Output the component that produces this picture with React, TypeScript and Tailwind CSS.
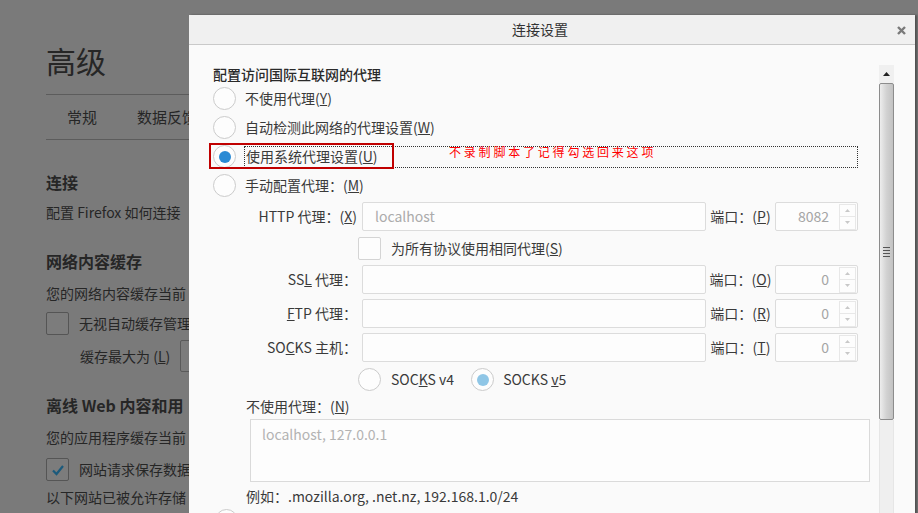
import React from 'react'

const font = "font-['Noto_Sans_CJK_SC','Noto_Sans',sans-serif]"

/** 暗くなった背景ページ（詳細設定） */
function BackgroundPage() {
    return (
        <div className="w-[189px] overflow-hidden pl-[46px] text-[#262626]">
            <div className="h-[40px]" />
            <div className="h-[40px] text-[30px] leading-[40px]">高级</div>
            <div className="mt-[14px] h-px w-[160px] bg-[#5c5c5c]" />
            <div className="flex h-[44px] items-center gap-[40px] pl-[21px] text-[15px] whitespace-nowrap">
                <span>常规</span>
                <span>数据反馈</span>
            </div>
            <div className="h-px w-[160px] bg-[#5c5c5c]" />
            <div className="mt-[30px] h-[24px] text-[16px] leading-[24px] font-bold">连接</div>
            <div className="mt-[6px] h-[24px] text-[14px] leading-[24px] whitespace-nowrap">配置 Firefox 如何连接</div>
            <div className="mt-[25px] h-[24px] text-[16px] leading-[24px] font-bold">网络内容缓存</div>
            <div className="mt-[8px] h-[24px] text-[14px] leading-[24px] whitespace-nowrap">您的网络内容缓存当前</div>
            <div className="mt-[7px] flex h-[23px] items-center gap-[10px] whitespace-nowrap">
                <div className="h-[23px] w-[23px] shrink-0 rounded-[2px] border border-[#555] bg-[#7c7c7c]" />
                <span className="text-[14px]">无视自动缓存管理</span>
            </div>
            <div className="mt-[5px] flex h-[32px] items-center pl-[34px] whitespace-nowrap">
                <span className="w-[100px] shrink-0 text-[14px]">缓存最大为 (<u>L</u>)</span>
                <div className="h-[32px] w-[60px] shrink-0 rounded-[2px] border border-[#5a5a5a] bg-[#7c7c7c]" />
            </div>
            <div className="mt-[21px] h-[24px] text-[16px] leading-[24px] font-bold whitespace-nowrap">离线 Web 内容和用</div>
            <div className="mt-[8px] h-[24px] text-[14px] leading-[24px] whitespace-nowrap">您的应用程序缓存当前</div>
            <div className="mt-[9px] flex h-[23px] items-center gap-[10px] whitespace-nowrap">
                <div className="flex h-[23px] w-[23px] shrink-0 items-center justify-center rounded-[2px] border border-[#555] bg-[#7c7c7c]">
                    <svg width="14" height="12" viewBox="0 0 14 12">
                        <path d="M2 6.5 L5.5 10 L12 2" fill="none" stroke="#1b5a7c" strokeWidth="2.2" />
                    </svg>
                </div>
                <span className="text-[14px]">网站请求保存数据</span>
            </div>
            <div className="mt-[4px] h-[24px] text-[14px] leading-[24px] whitespace-nowrap">以下网站已被允许存储</div>
        </div>
    )
}

function Radio({ checked = false, light = false }: { checked?: boolean, light?: boolean }) {
    return (
        <div className="flex h-[23px] w-[23px] shrink-0 items-center justify-center rounded-full border border-[#cbcbcb] bg-[#fdfdfd]">
            {checked && <div className={`h-[12px] w-[12px] rounded-full ${light ? 'bg-[#8fc6e6]' : 'bg-[#2a8ad4]'}`} />}
        </div>
    )
}

type ProxyRowProps = {
    label: React.ReactNode,
    portLabel: React.ReactNode,
    value?: string,
    port: string
}

/** プロキシ行（ホスト入力＋ポート入力） */
function ProxyRow({ label, portLabel, value, port }: ProxyRowProps) {
    return (
        <div className="flex h-[29px] items-center pl-[33px] whitespace-nowrap">
            <div className="w-[111px] text-right text-[14px] text-[#3a3a3a]">{label}</div>
            <div className="ml-[5px] flex h-[29px] w-[344px] items-center rounded-[2px] border border-[#dcdcdc] bg-[#fdfdfd] pl-[12px] text-[14px] text-[#ababab]">
                {value}
            </div>
            <div className="flex w-[69px] justify-center text-[14px] text-[#3a3a3a]">{portLabel}</div>
            <div className="flex h-[29px] w-[83px] items-center rounded-[2px] border border-[#dcdcdc] bg-[#fdfdfd]">
                <span className="flex-1 pr-[10px] text-right text-[14px] text-[#a5a5a5]">{port}</span>
                <div className="mr-[1px] flex h-[26px] w-[17px] flex-col">
                    <div className="flex flex-1 items-center justify-center border border-[#e8e8e8]">
                        <svg width="5" height="3" viewBox="0 0 5 3"><path d="M0 3 L2.5 0 L5 3Z" fill="#c8c8c8" /></svg>
                    </div>
                    <div className="flex flex-1 items-center justify-center border border-t-0 border-[#e8e8e8]">
                        <svg width="5" height="3" viewBox="0 0 5 3"><path d="M0 0 L2.5 3 L5 0Z" fill="#c8c8c8" /></svg>
                    </div>
                </div>
            </div>
        </div>
    )
}

function Scrollbar() {
    return (
        <div className="mt-[20px] flex w-[15px] shrink-0 flex-col">
            <div className="flex h-[18px] items-center justify-center bg-[#f0f0f0]">
                <svg width="7" height="4" viewBox="0 0 7 4"><path d="M0 4 L3.5 0 L7 4Z" fill="#222" /></svg>
            </div>
            <div className="flex h-[337px] items-center justify-center rounded-[2px] border border-[#8c8c8c] bg-gradient-to-r from-[#ededed] via-[#d2d2d2] to-[#c2c2c2]">
                <div className="flex w-[7px] flex-col gap-[2px]">
                    <div className="h-px bg-[#555]" />
                    <div className="h-px bg-[#555]" />
                    <div className="h-px bg-[#555]" />
                    <div className="h-px bg-[#555]" />
                </div>
            </div>
            <div className="flex-1 border-x border-[#e6e6e6] bg-[#efefef]" />
        </div>
    )
}

/** 接続設定ダイアログ */
function ConnectionDialog() {
    const radios = [
        { label: <>不使用代理(<u>Y</u>)</> },
        { label: <>自动检测此网络的代理设置(<u>W</u>)</> },
    ]
    return (
        <div className="absolute left-[189px] top-[15px] flex h-[500px] w-[726px] flex-col overflow-hidden bg-[#fafafa] shadow-[2px_0_2px_rgba(0,0,0,0.35)]">
            <div className="relative flex h-[30px] shrink-0 items-center justify-center border-b border-[#c9c9c9] bg-[#f0f0f0] pr-[24px] text-[14px] text-[#333]">
                连接设置
                <svg className="absolute right-[9px] top-[11px]" width="9" height="9" viewBox="0 0 9 9">
                    <path d="M1 1 L8 8 M8 1 L1 8" stroke="#7a7a7a" strokeWidth="2.4" />
                </svg>
            </div>
            <div className="flex flex-1">
                <div className="w-[690px] shrink-0 pl-[24px] text-[14px] text-[#3a3a3a]">
                    <div className="mt-[19px] h-[20px] leading-[20px] font-medium text-[#2a2a2a]">配置访问国际互联网的代理</div>
                    {radios.map((r, i) => (
                        <div key={i} className="flex h-[29px] items-center gap-[9px] whitespace-nowrap">
                            <Radio />
                            <span>{r.label}</span>
                        </div>
                    ))}
                    <div className="relative flex h-[29px] items-center whitespace-nowrap">
                        <Radio checked />
                        <div className="ml-[8px] flex h-[22px] w-[614px] items-center border border-dotted border-[#333] pl-[1px]">
                            使用系统代理设置(<u>U</u>)
                        </div>
                        <div className="absolute left-[-4px] top-[1px] h-[26px] w-[185px] border-2 border-[#c00000]" />
                        <div className="absolute left-[236px] top-[2px] text-[12px] leading-[16px] tracking-[2.8px] text-[#ff0000]">
                            不录制脚本了记得勾选回来这项
                        </div>
                    </div>
                    <div className="flex h-[29px] items-center gap-[9px] whitespace-nowrap">
                        <Radio />
                        <span>手动配置代理：(<u>M</u>)</span>
                    </div>
                    <div className="mt-[2px]">
                        <ProxyRow label={<>HTTP 代理：(<u>X</u>)</>} value="localhost" portLabel={<>端口：(<u>P</u>)</>} port="8082" />
                    </div>
                    <div className="mt-[6px] flex h-[23px] items-center gap-[10px] pl-[145px] whitespace-nowrap">
                        <div className="h-[23px] w-[23px] rounded-[2px] border border-[#d4d4d4] bg-[#fdfdfd]" />
                        <span>为所有协议使用相同代理(<u>S</u>)</span>
                    </div>
                    <div className="mt-[5px]">
                        <ProxyRow label={<>SS<u>L</u> 代理：</>} portLabel={<>端口：(<u>O</u>)</>} port="0" />
                    </div>
                    <div className="mt-[5px]">
                        <ProxyRow label={<><u>F</u>TP 代理：</>} portLabel={<>端口：(<u>R</u>)</>} port="0" />
                    </div>
                    <div className="mt-[5px]">
                        <ProxyRow label={<>SO<u>C</u>KS 主机：</>} portLabel={<>端口：(<u>T</u>)</>} port="0" />
                    </div>
                    <div className="mt-[6px] flex h-[23px] items-center pl-[145px] whitespace-nowrap">
                        <Radio />
                        <span className="ml-[10px]">SOC<u>K</u>S v4</span>
                        <div className="ml-[17px]"><Radio checked light /></div>
                        <span className="ml-[9px]">SOCKS <u>v</u>5</span>
                    </div>
                    <div className="mt-[5px] h-[20px] pl-[33px] leading-[20px] whitespace-nowrap">不使用代理：(<u>N</u>)</div>
                    <div className="ml-[37px] mt-[3px] h-[63px] w-[620px] border border-[#dadada] bg-[#fdfdfd] pl-[11px] pt-[4px] leading-[20px] text-[#b3b3b3]">
                        localhost, 127.0.0.1
                    </div>
                    <div className="mt-[4px] h-[20px] pl-[33px] leading-[20px] whitespace-nowrap">例如：.mozilla.org, .net.nz, 192.168.1.0/24</div>
                    <div className="flex h-[29px] items-center pl-[2px]">
                        <Radio />
                    </div>
                </div>
                <Scrollbar />
            </div>
        </div>
    )
}

export default function App() {
    return (
        <div className={`relative h-[513px] w-[918px] overflow-hidden bg-[#7a7a7a] ${font}`}>
            <BackgroundPage />
            <ConnectionDialog />
        </div>
    )
}
